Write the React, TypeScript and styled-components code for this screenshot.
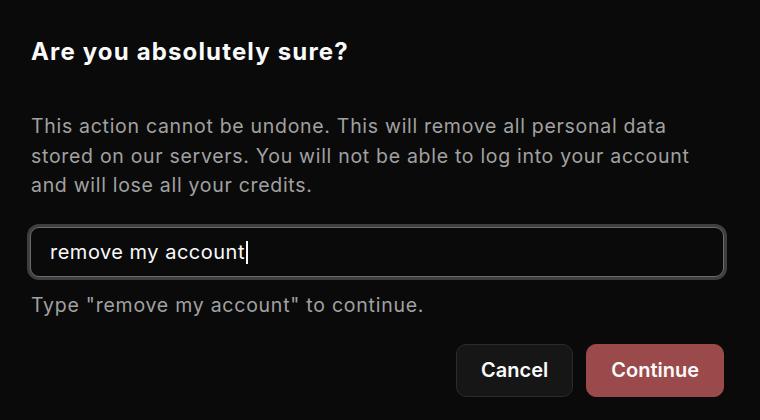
import React from "react";
import styled, { createGlobalStyle } from "styled-components";

const Global = createGlobalStyle`
  html, body { margin: 0; padding: 0; background: #0a0a0a; }
  body { font-family: Inter, "Noto Sans", sans-serif; -webkit-font-smoothing: antialiased; }
`;

const Dialog = styled.div`
  width: 760px;
  height: 420px;
  box-sizing: border-box;
  padding: 36px 36px 0 30px;
  display: flex;
  flex-direction: column;
  background: #0a0a0a;
`;

const Title = styled.h2`
  margin: 0 0 0 1px;
  font-size: 24px;
  line-height: 32px;
  font-weight: 700;
  color: #fafafa;
  letter-spacing: 1.15px;
`;

const Description = styled.p`
  margin: 44px 0 0 1px;
  font-size: 19.5px;
  line-height: 29.5px;
  letter-spacing: 0.7px;
  color: #a1a1a1;
`;

const Field = styled.div`
  margin-top: 26px;
  display: flex;
  flex-direction: column;
  gap: 15px;
`;

const InputWrap = styled.div`
  position: relative;
`;

const Input = styled.input`
  box-sizing: border-box;
  width: 100%;
  height: 50px;
  padding: 0 19px;
  font-family: Inter, "Noto Sans", sans-serif;
  font-size: 20px;
  letter-spacing: 0.5px;
  color: #fafafa;
  background: #0a0a0a;
  border: 1px solid #6b6b6b;
  border-radius: 9px;
  box-shadow: 0 0 0 3px #3f3f3f;
  outline: none;
  caret-color: transparent;
`;

const Caret = styled.span`
  position: absolute;
  left: 216px;
  top: 14px;
  width: 2px;
  height: 23px;
  background: #fafafa;
  pointer-events: none;
`;

const Help = styled.div`
  margin-left: 1px;
  font-size: 19.5px;
  line-height: 26px;
  letter-spacing: 0.75px;
  color: #a1a1a1;
`;

const Footer = styled.div`
  margin-top: 26px;
  display: flex;
  justify-content: flex-end;
  gap: 13px;
`;

const Button = styled.button<{ $variant: "outline" | "danger" }>`
  height: 53px;
  padding: 0 24px;
  border-radius: 10px;
  font-family: Inter, "Noto Sans", sans-serif;
  font-size: 20px;
  font-weight: 600;
  color: #fafafa;
  cursor: pointer;
  background: ${(p) => (p.$variant === "danger" ? "#9a4a4a" : "#161616")};
  border: 1px solid ${(p) => (p.$variant === "danger" ? "#9a4a4a" : "#2b2b2b")};
`;

export default function App() {
  return (
    <>
      <Global />
      <Dialog>
        <Title>Are you absolutely sure?</Title>
        <Description>
          This action cannot be undone. This will remove all personal data stored on our servers. You
          will not be able to log into your account and will lose all your credits.
        </Description>
        <Field>
          <InputWrap>
            <Input defaultValue="remove my account" />
            <Caret />
          </InputWrap>
          <Help>Type "remove my account" to continue.</Help>
        </Field>
        <Footer>
          <Button $variant="outline">Cancel</Button>
          <Button $variant="danger">Continue</Button>
        </Footer>
      </Dialog>
    </>
  );
}
